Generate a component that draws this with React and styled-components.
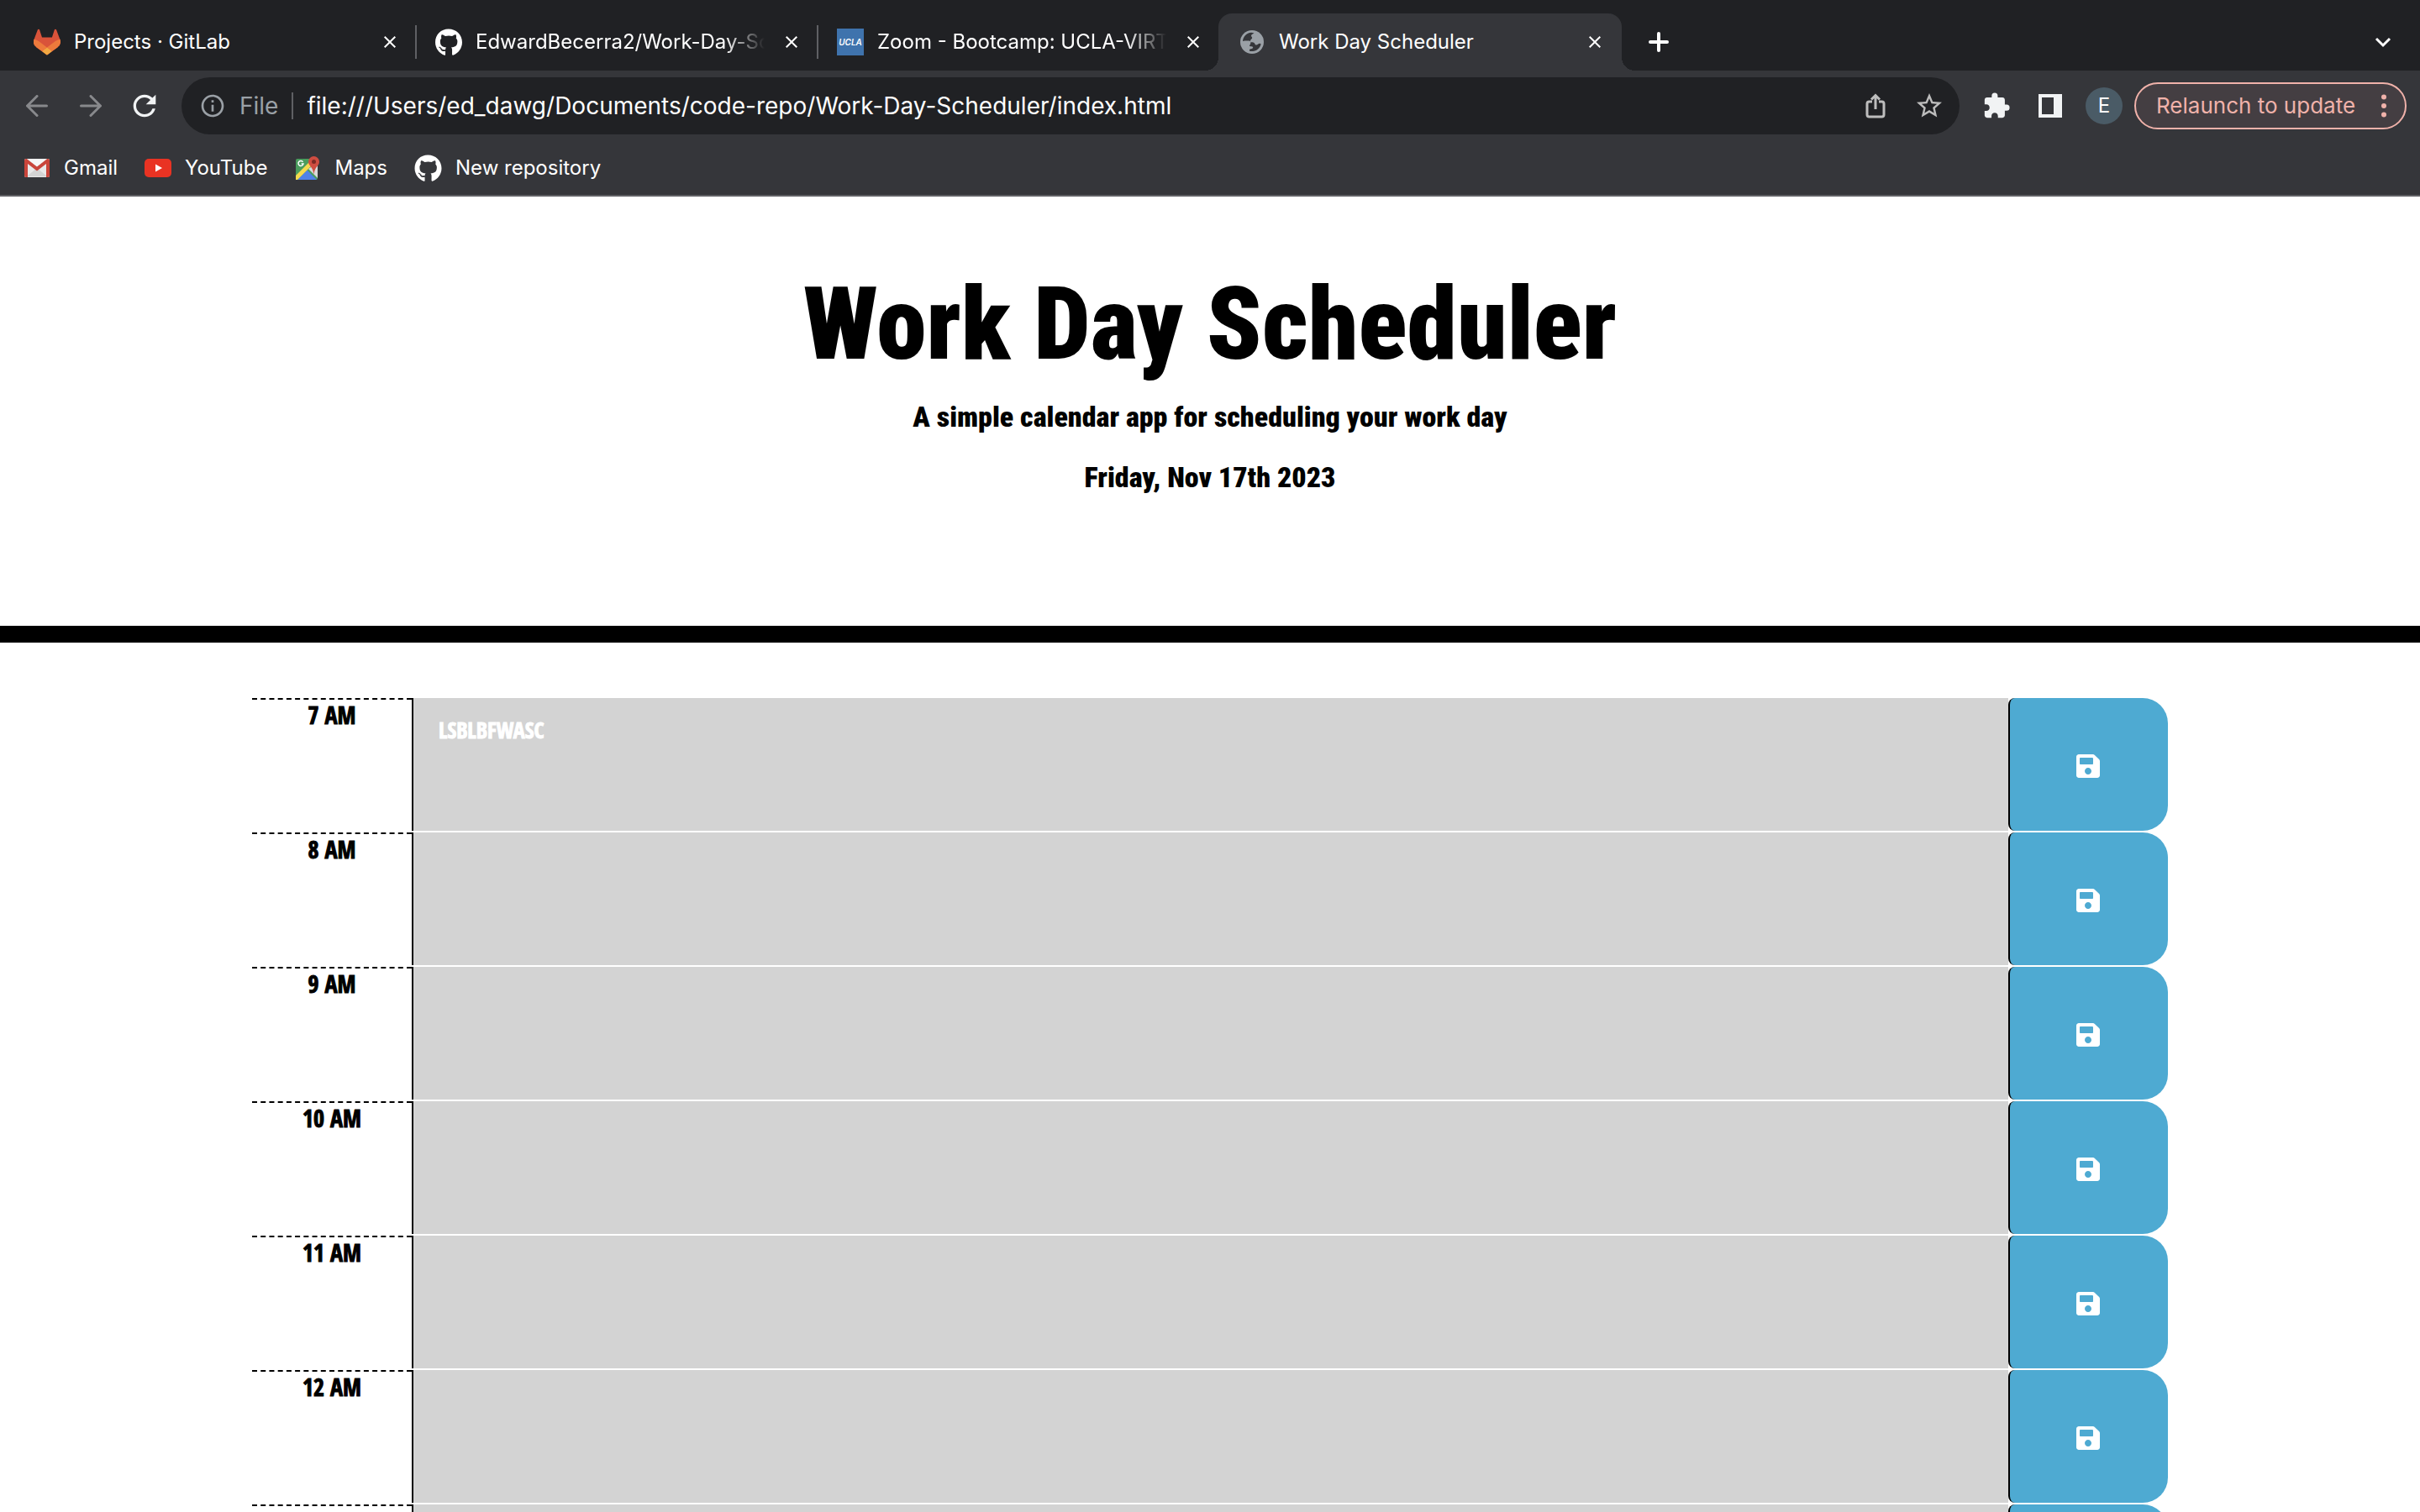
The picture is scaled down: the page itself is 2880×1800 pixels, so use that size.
import React from "react";
import styled, { createGlobalStyle, css } from "styled-components";
import { FaGithub, FaSave } from "react-icons/fa";
import {
  MdClose,
  MdExtension,
  MdOutlineInfo,
  MdRefresh,
  MdStarBorder,
} from "react-icons/md";

const ui = `Inter, Roboto, "Liberation Sans", sans-serif`;
const display = `"Roboto Condensed", "Open Sans Condensed", Roboto, sans-serif`;
const narrow = `"Open Sans Condensed", "Roboto Condensed", Roboto, sans-serif`;

const color = {
  strip: "#202124",
  bar: "#35363a",
  line: "#5f6064",
  muted: "#9aa0a6",
  text: "#ffffff",
  update: "#f0b2aa",
  save: "#4eaad2",
  past: "#d3d3d3",
};

const GlobalStyle = createGlobalStyle`
  *, *::before, *::after { box-sizing: border-box; }
  body { margin: 0; background: #fff; color: #000; }
  button, input, textarea { font: inherit; color: inherit; margin: 0; }
`;

const plainButton = css`
  border: 0;
  padding: 0;
  background: none;
  cursor: pointer;
  display: flex;
  align-items: center;
  justify-content: center;
  flex: none;
`;

const Browser = styled.div`
  display: flex;
  flex-direction: column;
  height: 100vh;
  overflow: hidden;
`;

const Chrome = styled.div`
  flex: none;
  font-family: ${ui};
  font-size: 24px;
  line-height: 36px;
  color: ${color.text};
  background: ${color.bar};
  border-bottom: 2px solid ${color.line};
`;

/* tab strip */

const TabStrip = styled.div`
  display: flex;
  height: 84px;
  padding: 16px 0 0 16px;
  background: ${color.strip};
`;

const Tab = styled.div`
  position: relative;
  display: flex;
  align-items: center;
  flex: 0 1 ${(p) => (p.$active ? 480 : 478)}px;
  min-width: 0;
  padding-right: ${(p) => (p.$active ? 24 : 22)}px;
  ${(p) =>
    p.$active &&
    css`
      background: ${color.bar};
      border-radius: 16px 16px 0 0;

      &::before,
      &::after {
        content: "";
        position: absolute;
        bottom: 0;
        width: 16px;
        height: 16px;
      }
      &::before {
        right: 100%;
        background: radial-gradient(circle at 0 0, transparent 16px, ${color.bar} 16px);
      }
      &::after {
        left: 100%;
        background: radial-gradient(circle at 100% 0, transparent 16px, ${color.bar} 16px);
      }
    `}
`;

const TabDivider = styled.span`
  flex: none;
  width: 2px;
  height: 40px;
  margin-right: 22px;
  background: ${(p) => (p.$visible ? color.line : "transparent")};
`;

const Favicon = styled.span`
  display: flex;
  align-items: center;
  justify-content: center;
  flex: none;
  width: 32px;
  height: 32px;
  margin-right: 16px;
`;

const UclaBadge = styled.span`
  display: flex;
  align-items: center;
  justify-content: center;
  width: 32px;
  height: 32px;
  background: #3f73ad;
  font-size: 10px;
  font-weight: 600;
  font-style: italic;
  line-height: 12px;
`;

const TabTitle = styled.span`
  flex: 1;
  min-width: 0;
  overflow: hidden;
  white-space: nowrap;
  ${(p) =>
    p.$faded &&
    css`
      mask-image: linear-gradient(to right, #000 calc(100% - 48px), transparent);
    `}
`;

const CloseButton = styled.button`
  ${plainButton}
  width: 24px;
  height: 24px;
  margin: 0 -4px 0 20px;
`;

const StripButton = styled.button`
  ${plainButton}
  width: 88px;
  margin-left: ${(p) => (p.$end ? "auto" : 0)};
`;

/* toolbar */

const Toolbar = styled.div`
  display: flex;
  align-items: center;
  padding: 8px 16px 8px 12px;
`;

const ToolButton = styled.button`
  ${plainButton}
  width: 64px;
  height: 64px;
  color: ${(p) => p.$tone || "#f1f3f4"};
`;

const AddressBar = styled.div`
  display: flex;
  align-items: center;
  flex: 1;
  height: 68px;
  margin: 0 12px;
  padding: 0 4px 0 21px;
  border-radius: 34px;
  background: ${color.strip};
  font-size: 28px;
  svg {
    flex: none;
  }
`;

const Scheme = styled.label`
  margin-left: 16px;
  padding-right: 16px;
  border-right: 2px solid ${color.line};
  line-height: 32px;
  color: ${color.muted};
`;

const AddressInput = styled.input`
  flex: 1;
  min-width: 0;
  height: 48px;
  padding: 0;
  margin-left: 16px;
  border: 0;
  outline: 0;
  background: none;
`;

const Avatar = styled.button`
  ${plainButton}
  width: 44px;
  height: 44px;
  margin-left: 10px;
  border-radius: 50%;
  background: #4a5b66;
`;

const UpdateButton = styled.button`
  ${plainButton}
  justify-content: space-between;
  width: 324px;
  height: 56px;
  margin-left: 14px;
  padding: 0 22px 0 24px;
  border: 2px solid ${color.update};
  border-radius: 28px;
  background: #443e42;
  color: ${color.update};
  font-size: 26px;
`;

/* bookmarks */

const Bookmarks = styled.nav`
  display: flex;
  align-items: center;
  gap: 32px;
  height: 64px;
  padding-left: 28px;
`;

const Bookmark = styled.a`
  display: flex;
  align-items: center;
  gap: 16px;
  color: inherit;
  text-decoration: none;
  svg {
    flex: none;
  }
`;

/* page */

const Page = styled.div`
  flex: 1;
  min-height: 0;
  overflow: hidden;
  font-family: ${display};
  font-weight: 900;
`;

const Header = styled.header`
  display: flex;
  flex-direction: column;
  align-items: center;
  padding: 80px 24px 153px;
  border-bottom: 20px solid #000;
  text-align: center;
`;

const Title = styled.h1`
  margin: 0 0 14px;
  font-size: 120px;
  font-weight: 900;
  line-height: 144px;
`;

const Lead = styled.p`
  margin: 0 0 24px;
  font-size: 34px;
  line-height: 48px;
  &:last-child {
    margin-bottom: 0;
  }
`;

const Schedule = styled.main`
  max-width: 2280px;
  margin: 66px auto 0;
  font-family: ${narrow};
  font-size: 28px;
  line-height: 36px;
  -webkit-text-stroke: 1px currentColor;
`;

const TimeBlock = styled.div`
  display: grid;
  grid-template-columns: 1fr 10fr 1fr;
  height: 160px;
  padding-bottom: 2px;
`;

const Hour = styled.label`
  border-top: 2px dashed #000;
  text-align: center;
`;

const Entry = styled.textarea`
  display: block;
  width: 100%;
  height: 100%;
  padding: 20px 30px;
  border: 0;
  border-left: 2px solid #000;
  border-radius: 0;
  outline: 0;
  resize: none;
  overflow: hidden;
  background: ${color.past};
  color: #fff;
  font-size: 26px;
`;

const SaveButton = styled.button`
  ${plainButton}
  padding: 4px 2px 0 0;
  border-left: 2px solid #000;
  border-radius: 8px 30px 30px 8px;
  background: ${color.save};
  color: #fff;
`;

/* drawings */

const GitLabIcon = () => (
  <svg width="34" height="32" viewBox="0 0 25 24">
    <path fill="#d9533a" d="m24.507 9.5-.034-.09L21.082.562a.896.896 0 0 0-1.694.091l-2.29 7.01H7.825L5.535.653a.898.898 0 0 0-1.694-.09L.451 9.411.416 9.5a6.297 6.297 0 0 0 2.09 7.278l.012.01.03.022 5.16 3.867 2.56 1.935 1.554 1.176a1.051 1.051 0 0 0 1.268 0l1.555-1.176 2.56-1.935 5.197-3.89.014-.01A6.297 6.297 0 0 0 24.507 9.5Z" />
    <path fill="#ed7a3c" d="m24.507 9.5-.034-.09a11.44 11.44 0 0 0-4.56 2.051l-7.447 5.632 4.742 3.584 5.197-3.89.014-.01A6.297 6.297 0 0 0 24.507 9.5Z" />
    <path fill="#f2a842" d="m7.707 20.677 2.56 1.935 1.555 1.176a1.051 1.051 0 0 0 1.268 0l1.555-1.176 2.56-1.935-4.743-3.584-4.755 3.584Z" />
    <path fill="#ed7a3c" d="M5.01 11.461a11.43 11.43 0 0 0-4.56-2.05L.416 9.5a6.297 6.297 0 0 0 2.09 7.278l.012.01.03.022 5.16 3.867 4.745-3.584-7.444-5.632Z" />
  </svg>
);

const GlobeIcon = () => (
  <svg width="28" height="28" viewBox="0 0 28 28">
    <circle cx="14" cy="14" r="14" fill={color.muted} />
    <path fill={color.bar} d="M3 13.200C3.300 7.500 7.600 3.200 13 2.800l3.400.4c-1 1.200-3.400 1.600-3.400 3.400 0 1 1 1.400 1.200 2.400.2 1.400-2.200 1.800-2.200 3.400 0 .8.500 1 .5 1l-9.500-.2Z" />
    <path fill={color.bar} d="M11.400 25c-.8-.8-.6-2.200.4-2.400 1.600-.2 3-.4 3.400-2 .2-1.200-1.400-1.400-2.600-1.400-1.600 0-2-.8-2-2 0-1.300-.4-2.400 1.200-2.800 1.600-.3 4-.2 5 .8.900 1 .6 2.200 2 2.400 1.800.2 2.400-1.600 4.400-1.800.8 0 1.200.2 1.400.6C23.600 21.400 19.200 25.600 11.400 25Z" />
    <path fill={color.muted} d="M2.600 13.600c1.400-1.600 4.600-1.200 7.800-1 1.800.1 2.200 1.600 1.800 3.400l-1.800 3.600.8 5.400-4.600-2.400-3.400-4.200Z" />
  </svg>
);

const PlusIcon = () => (
  <svg width="24" height="24" viewBox="0 0 24 24" stroke="currentColor" strokeWidth="4" strokeLinecap="round">
    <path d="M12 2v20M2 12h20" />
  </svg>
);

const ChevronIcon = () => (
  <svg width="20" height="14" viewBox="0 0 20 14" fill="none" stroke="currentColor" strokeWidth="3">
    <path d="m2 3 8 8 8-8" />
  </svg>
);

const ArrowIcon = ({ forward }) => (
  <svg width="26" height="26" viewBox="0 0 26 26" fill="none" stroke="currentColor" strokeWidth="3" strokeLinecap="round" strokeLinejoin="round">
    <path d={forward ? "M1.500 13h23M13 1.500 24.500 13 13 24.500" : "M24.500 13h-23M13 1.500 1.500 13 13 24.500"} />
  </svg>
);

const ShareIcon = () => (
  <svg width="24" height="30" viewBox="0 0 24 30" fill="none" stroke="currentColor" strokeWidth="3">
    <path d="M8 10H4.500A2.500 2.500 0 0 0 2 12.500v13A2.500 2.500 0 0 0 4.500 28h15a2.500 2.500 0 0 0 2.500-2.500v-13a2.500 2.500 0 0 0-2.500-2.500H16M12 19V2.500M7 7.500l5-5 5 5" />
  </svg>
);

const PanelIcon = () => (
  <svg width="28" height="28" viewBox="0 0 28 28">
    <path fill="currentColor" fillRule="evenodd" d="M0 0h28v28H0ZM4 4v20h14V4Z" />
  </svg>
);

const DotsIcon = () => (
  <svg width="6" height="28" viewBox="0 0 6 28" fill="currentColor">
    <circle cx="3" cy="3.500" r="3" />
    <circle cx="3" cy="14" r="3" />
    <circle cx="3" cy="24.500" r="3" />
  </svg>
);

const GmailIcon = () => (
  <svg width="32" height="24" viewBox="0 0 32 24">
    <rect x="1" y="1" width="30" height="22" rx="2" fill="#e9e9e9" />
    <path fill="#d4d4d4" d="m4 22 12-10 12 10Z" />
    <path fill="#c9453b" d="M1 3v18a2 2 0 0 0 2 2h2V7l11 8.500L27 7v16h2a2 2 0 0 0 2-2V3c0-1.800-2-2.600-3.400-1.600L16 10.500 4.400 1.400C3 .4 1 1.200 1 3Z" />
    <path fill="#f6f6f6" d="M5 1.500h22L16 10Z" />
  </svg>
);

const YouTubeIcon = () => (
  <svg width="32" height="24" viewBox="0 0 32 24">
    <rect y="1" width="32" height="22" rx="5" fill="#e93323" />
    <path fill="#fff" d="m13 7.500 8 4.500-8 4.500Z" />
  </svg>
);

const MapsIcon = () => (
  <svg width="32" height="32" viewBox="0 0 32 32">
    <rect x="2" y="5" width="26" height="25" rx="2" fill="#4a9c5d" />
    <path fill="#d9d9d9" d="M28 10v18l-11-11Z" />
    <path fill="#4f82e8" d="M4 30 15.500 18.500 27 30Z" />
    <path fill="#f5d94f" d="M2 25 18 9l3.500 3.500L4 30H2Z" />
    <path fill="none" stroke="#fff" strokeWidth="1.500" d="M10.500 8.800A3 3 0 1 0 11 11H8.600" />
    <path fill="#cf4d41" d="M23.500 2a6.500 6.500 0 0 0-6.500 6.500c0 5 5.500 6 6.500 15 1-9 6.500-10 6.500-15A6.500 6.500 0 0 0 23.500 2Z" />
    <circle cx="23.500" cy="8.500" r="2.500" fill="#7c2a24" />
  </svg>
);

const tabs = [
  { title: "Projects · GitLab", icon: <GitLabIcon /> },
  { title: "EdwardBecerra2/Work-Day-Sc", icon: <FaGithub size={33} />, divider: true, faded: true },
  { title: "Zoom - Bootcamp: UCLA-VIRT", icon: <UclaBadge>UCLA</UclaBadge>, divider: true, faded: true },
  { title: "Work Day Scheduler", icon: <GlobeIcon />, active: true },
];

const bookmarks = [
  { name: "Gmail", icon: <GmailIcon /> },
  { name: "YouTube", icon: <YouTubeIcon /> },
  { name: "Maps", icon: <MapsIcon /> },
  { name: "New repository", icon: <FaGithub size={33} /> },
];

const hours = [
  { id: 7, label: "7 AM", entry: "LSBLBFWASC" },
  { id: 8, label: "8 AM", entry: "" },
  { id: 9, label: "9 AM", entry: "" },
  { id: 10, label: "10 AM", entry: "" },
  { id: 11, label: "11 AM", entry: "" },
  { id: 12, label: "12 AM", entry: "" },
  { id: 13, label: "1 PM", entry: "" },
];

export default function App() {
  return (
    <Browser>
      <GlobalStyle />
      <Chrome>
        <TabStrip>
          {tabs.map((tab) => (
            <Tab key={tab.title} $active={tab.active}>
              <TabDivider $visible={tab.divider} />
              <Favicon>{tab.icon}</Favicon>
              <TabTitle $faded={tab.faded}>{tab.title}</TabTitle>
              <CloseButton aria-label={`Close ${tab.title}`}>
                <MdClose size={28} />
              </CloseButton>
            </Tab>
          ))}
          <StripButton aria-label="New tab">
            <PlusIcon />
          </StripButton>
          <StripButton $end aria-label="Search tabs">
            <ChevronIcon />
          </StripButton>
        </TabStrip>

        <Toolbar>
          <ToolButton $tone="#88898c" aria-label="Back">
            <ArrowIcon />
          </ToolButton>
          <ToolButton $tone="#88898c" aria-label="Forward">
            <ArrowIcon forward />
          </ToolButton>
          <ToolButton aria-label="Reload">
            <MdRefresh size={40} />
          </ToolButton>
          <AddressBar>
            <MdOutlineInfo size={32} color={color.muted} />
            <Scheme htmlFor="address">File</Scheme>
            <AddressInput
              id="address"
              defaultValue="file:///Users/ed_dawg/Documents/code-repo/Work-Day-Scheduler/index.html"
            />
            <ToolButton $tone="#bdbdbd" aria-label="Share">
              <ShareIcon />
            </ToolButton>
            <ToolButton $tone="#bdbdbd" aria-label="Bookmark this page">
              <MdStarBorder size={36} />
            </ToolButton>
          </AddressBar>
          <ToolButton aria-label="Extensions">
            <MdExtension size={34} />
          </ToolButton>
          <ToolButton aria-label="Side panel">
            <PanelIcon />
          </ToolButton>
          <Avatar>E</Avatar>
          <UpdateButton>
            Relaunch to update
            <DotsIcon />
          </UpdateButton>
        </Toolbar>

        <Bookmarks>
          {bookmarks.map((item) => (
            <Bookmark key={item.name} href="#">
              {item.icon}
              {item.name}
            </Bookmark>
          ))}
        </Bookmarks>
      </Chrome>

      <Page>
        <Header>
          <Title>Work Day Scheduler</Title>
          <Lead>A simple calendar app for scheduling your work day</Lead>
          <Lead>Friday, Nov 17th 2023</Lead>
        </Header>
        <Schedule>
          {hours.map((hour) => (
            <TimeBlock key={hour.id}>
              <Hour htmlFor={`hour-${hour.id}`}>{hour.label}</Hour>
              <Entry id={`hour-${hour.id}`} defaultValue={hour.entry} />
              <SaveButton aria-label={`Save ${hour.label}`}>
                <FaSave size={32} />
              </SaveButton>
            </TimeBlock>
          ))}
        </Schedule>
      </Page>
    </Browser>
  );
}
